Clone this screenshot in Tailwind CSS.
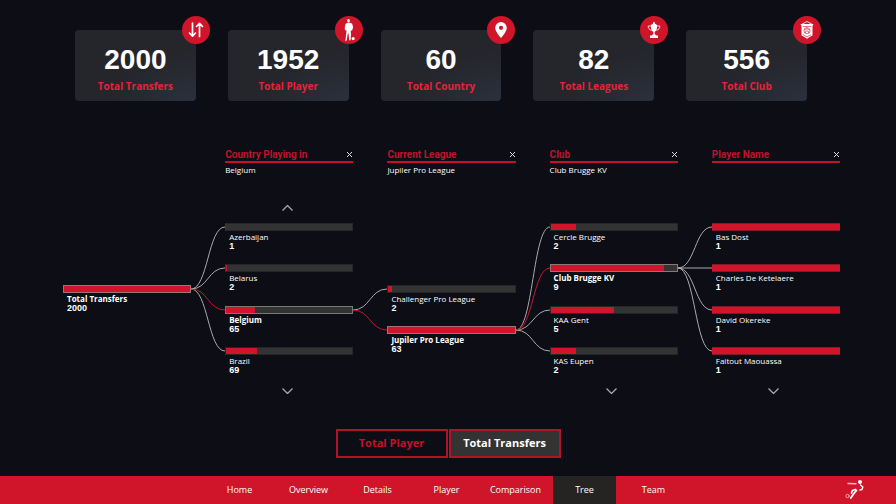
<!DOCTYPE html>
<html lang="en">
<head>
<meta charset="utf-8">
<meta name="viewport" content="width=device-width, initial-scale=1">
<title>Transfers Tree</title>
<script src="https://cdn.jsdelivr.net/npm/@tailwindcss/browser@4"></script>
</head>
<body class="flex min-h-screen flex-col bg-[#0c0d15] font-['Open_Sans',sans-serif] text-white">
<main class="flex-1">

<!-- Summary cards -->
<section class="grid grid-cols-5 gap-8 pt-[30px] pr-[89px] pl-[75px]" aria-label="Summary">
  <div class="relative flex flex-col items-center rounded-[4px] bg-[#25262b] bg-[radial-gradient(ellipse_at_bottom_right,#2b303d_0%,#25262b_50%)] pt-[14px] pb-[7px]">
    <p class="font-['Liberation_Sans',sans-serif] text-[28px] leading-[32px] font-bold">2000</p>
    <p class="pt-[2px] text-[10px] leading-[16px] font-bold text-[#e3243a]">Total Transfers</p>
    <span class="absolute -top-[14px] -right-[14px] flex size-[28px] items-center justify-center rounded-full bg-[#d0152b]">
      <svg class="size-[20px]" viewBox="0 0 20 20" fill="none" stroke="#fff" stroke-width="1.7" stroke-linecap="round" stroke-linejoin="round"><path d="M6.500 3v13M3.500 13l3 3.200 3-3.200M13.500 16.500v-13M10.500 6.500l3-3.200 3 3.200"/></svg>
    </span>
  </div>
  <div class="relative flex flex-col items-center rounded-[4px] bg-[#25262b] bg-[radial-gradient(ellipse_at_bottom_right,#2b303d_0%,#25262b_50%)] pt-[14px] pb-[7px]">
    <p class="font-['Liberation_Sans',sans-serif] text-[28px] leading-[32px] font-bold">1952</p>
    <p class="pt-[2px] text-[10px] leading-[16px] font-bold text-[#e3243a]">Total Player</p>
    <span class="absolute -top-[14px] -right-[14px] flex size-[28px] items-center justify-center rounded-full bg-[#d0152b]">
      <svg class="h-[24px] w-[20px]" viewBox="0 0 20 24" fill="#fff"><ellipse cx="9.500" cy="2.800" rx="1.300" ry="1.800"/><path d="M8.300 4.800h2.600l2.300.9.900 3.600-.9 2.900-1.500.6.300 4.200-.4 5.200h-1.400l-.5-5-.5-2.600-.8 2.800-.6 5.200-1.600.2-.2-.6.700-1 .3-4.200.5-4.400-1.500-.7-.3-1.600.8-4.300z"/><circle cx="14.200" cy="20.600" r="1.600"/></svg>
    </span>
  </div>
  <div class="relative flex flex-col items-center rounded-[4px] bg-[#25262b] bg-[radial-gradient(ellipse_at_bottom_right,#2b303d_0%,#25262b_50%)] pt-[14px] pb-[7px]">
    <p class="font-['Liberation_Sans',sans-serif] text-[28px] leading-[32px] font-bold">60</p>
    <p class="pt-[2px] text-[10px] leading-[16px] font-bold text-[#e3243a]">Total Country</p>
    <span class="absolute -top-[14px] -right-[14px] flex size-[28px] items-center justify-center rounded-full bg-[#d0152b]">
      <svg class="size-[20px]" viewBox="0 0 20 20" fill="#fff" fill-rule="evenodd"><path d="M10 2a5.800 5.800 0 0 0-5.800 5.800C4.200 12 10 18 10 18s5.800-6 5.800-10.200A5.800 5.800 0 0 0 10 2zm0 3.700a2.100 2.100 0 1 1 0 4.200 2.100 2.100 0 0 1 0-4.200z"/></svg>
    </span>
  </div>
  <div class="relative flex flex-col items-center rounded-[4px] bg-[#25262b] bg-[radial-gradient(ellipse_at_bottom_right,#2b303d_0%,#25262b_50%)] pt-[14px] pb-[7px]">
    <p class="font-['Liberation_Sans',sans-serif] text-[28px] leading-[32px] font-bold">82</p>
    <p class="pt-[2px] text-[10px] leading-[16px] font-bold text-[#e3243a]">Total Leagues</p>
    <span class="absolute -top-[14px] -right-[14px] flex size-[28px] items-center justify-center rounded-full bg-[#d0152b]">
      <svg class="size-[20px]" viewBox="0 0 20 20" fill="#fff"><path d="M9.400 2h1.200l.5 1.700 2 1.300c.2 3.500-.7 6-2.400 6.900v2.100l1.600 1.500h1.700V18H6v-2.500h1.700L9.300 14v-2.100C7.600 11 6.700 8.500 6.900 5l2-1.300z"/><path d="M7 6H4.200c0 2.200.8 3.800 3.600 4.300M13 6h2.800c0 2.200-.8 3.800-3.600 4.300" fill="none" stroke="#fff" stroke-width=".8"/></svg>
    </span>
  </div>
  <div class="relative flex flex-col items-center rounded-[4px] bg-[#25262b] bg-[radial-gradient(ellipse_at_bottom_right,#2b303d_0%,#25262b_50%)] pt-[14px] pb-[7px]">
    <p class="font-['Liberation_Sans',sans-serif] text-[28px] leading-[32px] font-bold">556</p>
    <p class="pt-[2px] text-[10px] leading-[16px] font-bold text-[#e3243a]">Total Club</p>
    <span class="absolute -top-[14px] -right-[14px] flex size-[28px] items-center justify-center rounded-full bg-[#d0152b]">
      <svg class="size-[20px]" viewBox="0 0 20 20" fill="none"><path d="M5 4.200L10 1.500l5 2.700" stroke="#fff" stroke-width=".8"/><path d="M3.800 4h12.400v1.600h-.7v10L12.700 17 10 18.700 7.300 17l-2.800-1.400v-10h-.7z" fill="#fff"/><g stroke="#d0152b" stroke-width=".6"><path d="M5.800 6.500h8.400M5.800 14.800l4.200 2 4.200-2"/><circle cx="10" cy="10.700" r="3.100"/><path d="M7 10l3-1.200 3 1.200M8.300 13l.5-2h2.400l.5 2M10 7.600v1.200"/></g></svg>
    </span>
  </div>
</section>

<!-- Decomposition tree -->
<section class="grid grid-cols-[1fr_34px_1fr_34px_1fr_34px_1fr_34px_1fr] pt-[47px] pr-[56px] pl-[63px]" aria-label="Transfers tree">

  <div class="pt-[137px]">
    <button type="button" class="block w-full text-left">
      <span class="block h-[8px] border border-[#a0717a] bg-[#d0152b]"></span>
      <span class="block pl-[4px] text-[8px] leading-[11px] font-bold">Total Transfers</span>
      <span class="block pl-[4px] font-['Liberation_Sans',sans-serif] text-[9px] leading-[8px] font-bold">2000</span>
    </button>
  </div>

  <svg class="mt-[75px] h-[165px] w-full overflow-visible" viewBox="0 0 34 165" fill="none" stroke="#aaa" stroke-width="1"><path d="M0 66C17 66 17 4 34 4M0 66C17 66 17 45 34 45M0 66C17 66 17 128 34 128"/><path stroke="#c8152b" d="M0 66C17 66 17 87 34 87"/></svg>

  <div>
    <div class="flex h-[15px] items-center justify-between border-b-2 border-[#c2122a]">
      <h2 class="font-[Roboto,sans-serif] text-[10px] leading-[12px] font-bold text-[#c2122a]">Country Playing in</h2>
      <button type="button" aria-label="Remove Country Playing in" class="p-px"><svg class="size-[5px]" viewBox="0 0 5 5" stroke="#ddd" stroke-width="1"><path d="M0 0l5 5M5 0L0 5"/></svg></button>
    </div>
    <p class="h-[41px] pt-px text-[8px] leading-[11px]">Belgium</p>
    <button type="button" aria-label="Scroll up" class="flex h-[19px] w-full justify-center pt-px pr-[4px]"><svg class="h-[6px] w-[11px]" viewBox="0 0 11 6" fill="none" stroke="#aaa" stroke-width="1.300"><path d="M.5 5.500l5-5 5 5"/></svg></button>
    <ul class="grid h-[165px] grid-rows-4">
      <li><button type="button" class="block w-full text-left"><span class="block h-[8px] border border-l-[#85172a] border-[#26262a] bg-[#333]"></span><span class="block pl-[4px] text-[8px] leading-[11px]">Azerbaijan</span><span class="block pl-[4px] font-['Liberation_Sans',sans-serif] text-[9px] leading-[8px] font-bold">1</span></button></li>
      <li><button type="button" class="block w-full text-left"><span class="block h-[8px] border border-l-[#85172a] border-[#26262a] bg-[#333]"><span class="block h-full bg-[#d0152b]" style="width:.3%"></span></span><span class="block pl-[4px] text-[8px] leading-[11px]">Belarus</span><span class="block pl-[4px] font-['Liberation_Sans',sans-serif] text-[9px] leading-[8px] font-bold">2</span></button></li>
      <li><button type="button" class="block w-full text-left" aria-pressed="true"><span class="block h-[8px] border border-[#777] bg-[#333]"><span class="block h-full bg-[#d0152b]" style="width:23%"></span></span><span class="block pl-[4px] text-[8px] leading-[11px] font-bold">Belgium</span><span class="block pl-[4px] font-['Liberation_Sans',sans-serif] text-[9px] leading-[8px] font-bold">65</span></button></li>
      <li><button type="button" class="block w-full text-left"><span class="block h-[8px] border border-[#26262a] bg-[#333]"><span class="block h-full bg-[#d0152b]" style="width:24.500%"></span></span><span class="block pl-[4px] text-[8px] leading-[11px]">Brazil</span><span class="block pl-[4px] font-['Liberation_Sans',sans-serif] text-[9px] leading-[8px] font-bold">69</span></button></li>
    </ul>
    <button type="button" aria-label="Scroll down" class="flex w-full justify-center pr-[4px]"><svg class="h-[6px] w-[11px]" viewBox="0 0 11 6" fill="none" stroke="#aaa" stroke-width="1.300"><path d="M.5 .5l5 5 5-5"/></svg></button>
  </div>

  <svg class="mt-[75px] h-[165px] w-full overflow-visible" viewBox="0 0 34 165" fill="none" stroke="#aaa" stroke-width="1"><path d="M0 87C17 87 17 66 34 66"/><path stroke="#c8152b" d="M0 87C17 87 17 107 34 107"/></svg>

  <div>
    <div class="flex h-[15px] items-center justify-between border-b-2 border-[#c2122a]">
      <h2 class="font-[Roboto,sans-serif] text-[10px] leading-[12px] font-bold text-[#c2122a]">Current League</h2>
      <button type="button" aria-label="Remove Current League" class="p-px"><svg class="size-[5px]" viewBox="0 0 5 5" stroke="#ddd" stroke-width="1"><path d="M0 0l5 5M5 0L0 5"/></svg></button>
    </div>
    <p class="h-[122px] pt-px text-[8px] leading-[11px]">Jupiler Pro League</p>
    <ul class="grid h-[82px] grid-rows-2">
      <li><button type="button" class="block w-full text-left"><span class="block h-[8px] border border-[#26262a] bg-[#333]"><span class="block h-full bg-[#d0152b]" style="width:3.200%"></span></span><span class="block pl-[4px] text-[8px] leading-[11px]">Challenger Pro League</span><span class="block pl-[4px] font-['Liberation_Sans',sans-serif] text-[9px] leading-[8px] font-bold">2</span></button></li>
      <li><button type="button" class="block w-full text-left" aria-pressed="true"><span class="block h-[8px] border border-[#a0717a] bg-[#d0152b]"></span><span class="block pl-[4px] text-[8px] leading-[11px] font-bold">Jupiler Pro League</span><span class="block pl-[4px] font-['Liberation_Sans',sans-serif] text-[9px] leading-[8px] font-bold">63</span></button></li>
    </ul>
  </div>

  <svg class="mt-[75px] h-[165px] w-full overflow-visible" viewBox="0 0 34 165" fill="none" stroke="#aaa" stroke-width="1"><path d="M0 107C17 107 17 4 34 4M0 107C17 107 17 87 34 87M0 107C17 107 17 128 34 128"/><path stroke="#c8152b" d="M0 107C17 107 17 45 34 45"/></svg>

  <div>
    <div class="flex h-[15px] items-center justify-between border-b-2 border-[#c2122a]">
      <h2 class="font-[Roboto,sans-serif] text-[10px] leading-[12px] font-bold text-[#c2122a]">Club</h2>
      <button type="button" aria-label="Remove Club" class="p-px"><svg class="size-[5px]" viewBox="0 0 5 5" stroke="#ddd" stroke-width="1"><path d="M0 0l5 5M5 0L0 5"/></svg></button>
    </div>
    <p class="h-[60px] pt-px text-[8px] leading-[11px]">Club Brugge KV</p>
    <ul class="grid h-[165px] grid-rows-4">
      <li><button type="button" class="block w-full text-left"><span class="block h-[8px] border border-[#26262a] bg-[#333]"><span class="block h-full bg-[#d0152b]" style="width:20%"></span></span><span class="block pl-[4px] text-[8px] leading-[11px]">Cercle Brugge</span><span class="block pl-[4px] font-['Liberation_Sans',sans-serif] text-[9px] leading-[8px] font-bold">2</span></button></li>
      <li><button type="button" class="block w-full text-left" aria-pressed="true"><span class="block h-[8px] border border-[#8b777b] bg-[#333]"><span class="block h-full bg-[#d0152b]" style="width:90%"></span></span><span class="block pl-[4px] text-[8px] leading-[11px] font-bold">Club Brugge KV</span><span class="block pl-[4px] font-['Liberation_Sans',sans-serif] text-[9px] leading-[8px] font-bold">9</span></button></li>
      <li><button type="button" class="block w-full text-left"><span class="block h-[8px] border border-[#26262a] bg-[#333]"><span class="block h-full bg-[#d0152b]" style="width:50%"></span></span><span class="block pl-[4px] text-[8px] leading-[11px]">KAA Gent</span><span class="block pl-[4px] font-['Liberation_Sans',sans-serif] text-[9px] leading-[8px] font-bold">5</span></button></li>
      <li><button type="button" class="block w-full text-left"><span class="block h-[8px] border border-[#26262a] bg-[#333]"><span class="block h-full bg-[#d0152b]" style="width:20%"></span></span><span class="block pl-[4px] text-[8px] leading-[11px]">KAS Eupen</span><span class="block pl-[4px] font-['Liberation_Sans',sans-serif] text-[9px] leading-[8px] font-bold">2</span></button></li>
    </ul>
    <button type="button" aria-label="Scroll down" class="flex w-full justify-center pr-[4px]"><svg class="h-[6px] w-[11px]" viewBox="0 0 11 6" fill="none" stroke="#aaa" stroke-width="1.300"><path d="M.5 .5l5 5 5-5"/></svg></button>
  </div>

  <svg class="mt-[75px] h-[165px] w-full overflow-visible" viewBox="0 0 34 165" fill="none" stroke="#aaa" stroke-width="1"><path d="M0 45C17 45 17 4 34 4M0 45H34M0 45C17 45 17 87 34 87M0 45C17 45 17 128 34 128"/></svg>

  <div>
    <div class="flex h-[15px] items-center justify-between border-b-2 border-[#c2122a]">
      <h2 class="font-[Roboto,sans-serif] text-[10px] leading-[12px] font-bold text-[#c2122a]">Player Name</h2>
      <button type="button" aria-label="Remove Player Name" class="p-px"><svg class="size-[5px]" viewBox="0 0 5 5" stroke="#ddd" stroke-width="1"><path d="M0 0l5 5M5 0L0 5"/></svg></button>
    </div>
    <ul class="mt-[60px] grid h-[165px] grid-rows-4">
      <li><button type="button" class="block w-full text-left"><span class="block h-[8px] border-y border-[#85172a] bg-[#d0152b]"></span><span class="block pl-[4px] text-[8px] leading-[11px]">Bas Dost</span><span class="block pl-[4px] font-['Liberation_Sans',sans-serif] text-[9px] leading-[8px] font-bold">1</span></button></li>
      <li><button type="button" class="block w-full text-left"><span class="block h-[8px] border-y border-[#85172a] bg-[#d0152b]"></span><span class="block pl-[4px] text-[8px] leading-[11px]">Charles De Ketelaere</span><span class="block pl-[4px] font-['Liberation_Sans',sans-serif] text-[9px] leading-[8px] font-bold">1</span></button></li>
      <li><button type="button" class="block w-full text-left"><span class="block h-[8px] border-y border-[#85172a] bg-[#d0152b]"></span><span class="block pl-[4px] text-[8px] leading-[11px]">David Okereke</span><span class="block pl-[4px] font-['Liberation_Sans',sans-serif] text-[9px] leading-[8px] font-bold">1</span></button></li>
      <li><button type="button" class="block w-full text-left"><span class="block h-[8px] border-y border-[#85172a] bg-[#d0152b]"></span><span class="block pl-[4px] text-[8px] leading-[11px]">Faitout Maouassa</span><span class="block pl-[4px] font-['Liberation_Sans',sans-serif] text-[9px] leading-[8px] font-bold">1</span></button></li>
    </ul>
    <button type="button" aria-label="Scroll down" class="flex w-full justify-center pr-[4px]"><svg class="h-[6px] w-[11px]" viewBox="0 0 11 6" fill="none" stroke="#aaa" stroke-width="1.300"><path d="M.5 .5l5 5 5-5"/></svg></button>
  </div>
</section>

<!-- Measure switch -->
<div class="flex justify-center gap-px pt-[35px]">
  <button type="button" class="h-[29px] w-[112px] border-2 border-[#b01428] text-[11px] font-bold text-[#c2122a]">Total Player</button>
  <button type="button" aria-pressed="true" class="h-[29px] w-[112px] border-2 border-[#b01428] bg-[#333] text-[11px] font-bold">Total Transfers</button>
</div>
</main>

<nav class="flex h-[28px] items-stretch justify-between bg-[#d0152b] pr-[31px] pl-[208px] text-[9px]" aria-label="Pages">
  <div class="flex gap-[6px]">
    <a href="#" class="flex w-[63px] items-center justify-center">Home</a>
    <a href="#" class="flex w-[63px] items-center justify-center">Overview</a>
    <a href="#" class="flex w-[63px] items-center justify-center">Details</a>
    <a href="#" class="flex w-[63px] items-center justify-center">Player</a>
    <a href="#" class="flex w-[63px] items-center justify-center">Comparison</a>
    <a href="#" aria-current="page" class="flex w-[63px] items-center justify-center bg-[#252423]">Tree</a>
    <a href="#" class="flex w-[63px] items-center justify-center">Team</a>
  </div>
  <svg class="mt-[3px] h-[22px] w-[20px]" viewBox="0 0 20 22" fill="none" stroke="#fff" stroke-linecap="round" stroke-linejoin="round"><circle cx="15" cy="3" r="2" fill="#fff" stroke="none"/><path d="M3 4.500l8 .3" stroke-width="1.400" opacity=".7"/><path d="M15.500 6l2.300 2-.8 2.500-2 .5" stroke-width="1.400"/><path d="M10.500 10.500l-3 1-1 2.500M11.500 11.500l-3 3.500-2.700 4" stroke-width="1.800"/><circle cx="2.500" cy="17" r="1.700" stroke-width=".9" opacity=".6"/></svg>
</nav>
</body>
</html>
